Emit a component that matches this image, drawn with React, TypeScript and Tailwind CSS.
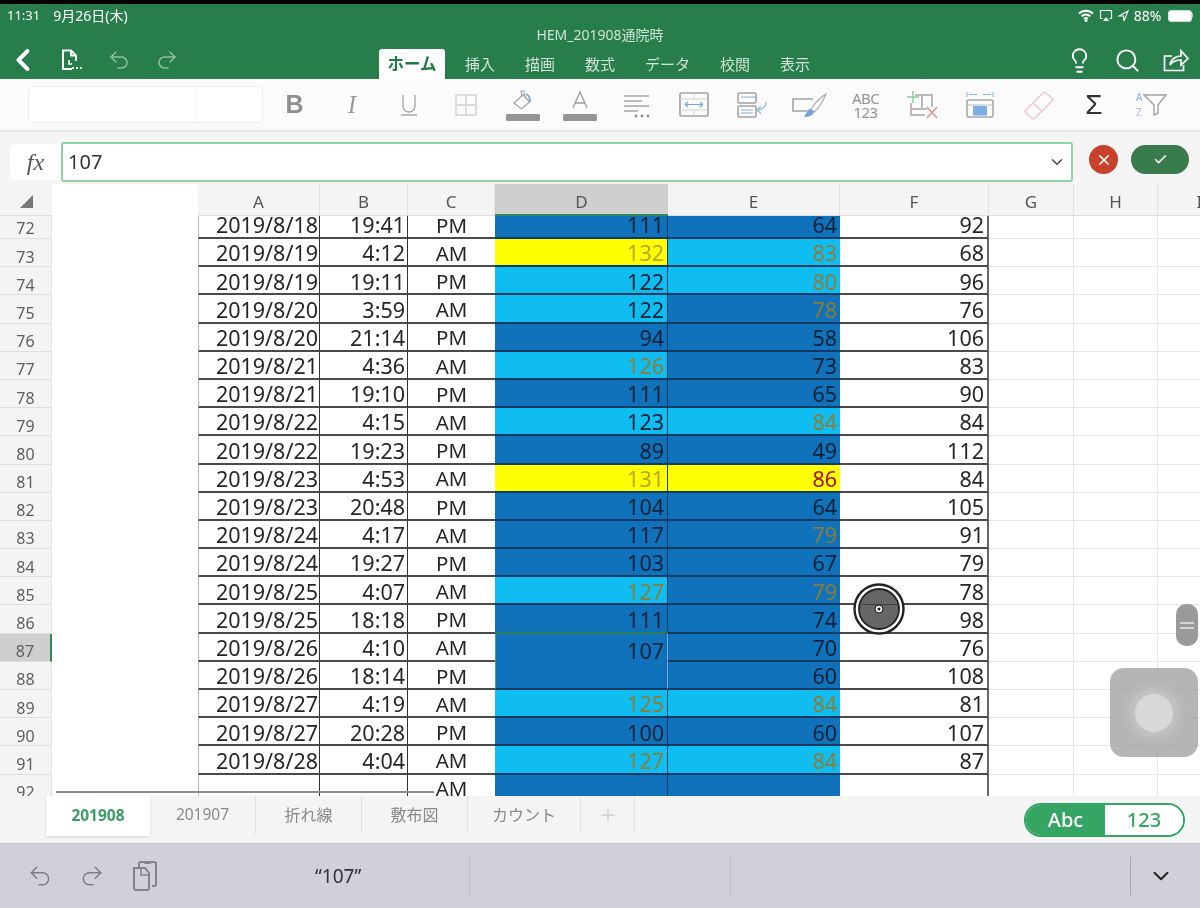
import React from "react";
import { ChevronLeft, Undo2, Redo2, Search, Lightbulb, ChevronDown, Check, X, Plus } from "lucide-react";

const JP = "font-['Noto_Sans','Noto_Sans_CJK_JP',sans-serif]";

type Tone = "dark" | "light" | "yellow";
type Ink = "k" | "o" | "y" | "r";
type Row = [number, string, string, string, string, Tone, Ink, string, Tone, Ink, string];

const rows: Row[] = [
  [72, "2019/8/18", "19:41", "PM", "111", "dark", "k", "64", "dark", "k", "92"],
  [73, "2019/8/19", "4:12", "AM", "132", "yellow", "y", "83", "light", "o", "68"],
  [74, "2019/8/19", "19:11", "PM", "122", "light", "k", "80", "light", "o", "96"],
  [75, "2019/8/20", "3:59", "AM", "122", "light", "k", "78", "dark", "o", "76"],
  [76, "2019/8/20", "21:14", "PM", "94", "dark", "k", "58", "dark", "k", "106"],
  [77, "2019/8/21", "4:36", "AM", "126", "light", "o", "73", "dark", "k", "83"],
  [78, "2019/8/21", "19:10", "PM", "111", "dark", "k", "65", "dark", "k", "90"],
  [79, "2019/8/22", "4:15", "AM", "123", "light", "k", "84", "light", "o", "84"],
  [80, "2019/8/22", "19:23", "PM", "89", "dark", "k", "49", "dark", "k", "112"],
  [81, "2019/8/23", "4:53", "AM", "131", "yellow", "y", "86", "yellow", "r", "84"],
  [82, "2019/8/23", "20:48", "PM", "104", "dark", "k", "64", "dark", "k", "105"],
  [83, "2019/8/24", "4:17", "AM", "117", "dark", "k", "79", "dark", "o", "91"],
  [84, "2019/8/24", "19:27", "PM", "103", "dark", "k", "67", "dark", "k", "79"],
  [85, "2019/8/25", "4:07", "AM", "127", "light", "o", "79", "dark", "o", "78"],
  [86, "2019/8/25", "18:18", "PM", "111", "dark", "k", "74", "dark", "k", "98"],
  [87, "2019/8/26", "4:10", "AM", "107", "dark", "k", "70", "dark", "k", "76"],
  [88, "2019/8/26", "18:14", "PM", "", "dark", "k", "60", "dark", "k", "108"],
  [89, "2019/8/27", "4:19", "AM", "125", "light", "o", "84", "light", "o", "81"],
  [90, "2019/8/27", "20:28", "PM", "100", "dark", "k", "60", "dark", "k", "107"],
  [91, "2019/8/28", "4:04", "AM", "127", "light", "o", "84", "light", "o", "87"],
  [92, "", "", "AM", "", "dark", "k", "", "dark", "k", ""],
];

const toneClass: Record<Tone, string> = {
  dark: "bg-[#0f72bb]",
  light: "bg-[#10bdf0]",
  yellow: "bg-[#ffff00]",
};
const inkClass: Record<Ink, string> = {
  k: "text-[#0b2138]",
  o: "text-[#8a7d38]",
  y: "text-[#b8a52a]",
  r: "text-[#a8101f]",
};

const GRID = "grid grid-cols-[52px_146px_122px_88px_87px_173px_172px_149px_85px_84px_84px]";
const blackLine = "border-b-2 border-[#4a4a4a] pt-[2px]";
const navyLine = "border-b-2 border-[#0e3a63] pt-[2px]";

function colorCell(v: string, tone: Tone, ink: Ink, extra: string) {
  return (
    <div className={`${toneClass[tone]} ${inkClass[ink]} ${navyLine} ${extra} flex items-center justify-end pr-[3px]`}>
      {v}
    </div>
  );
}

function Sheet() {
  return (
    <div className="h-[580px] shrink-0 overflow-hidden bg-white">
      <div className={`${GRID} auto-rows-[28.2px] -mt-[5.2px] text-[21.5px] leading-none text-[#262626] font-['Noto_Sans',sans-serif]`}>
        {rows.map((r) => {
          const [n, date, time, ap, d, dt, di, e, et, ei, f] = r;
          const sel = n === 87;
          return (
            <React.Fragment key={n}>
              <div className={`${sel ? "bg-[#cfcfcf] border-r-2 border-r-[#2f8a55]" : "bg-[#f4f4f5] border-r border-r-[#e4e4e6]"} border-b border-b-[#dedee0] flex items-center justify-center pt-[8px] text-[16px] text-[#5e5e5e]`}>
                {n}
              </div>
              <div className="bg-white" />
              <div className={`${blackLine} border-l border-l-[#b5b5b5] border-r-[1.5px] border-r-[#333] flex items-center justify-end pr-[1px]`}>{date}</div>
              <div className={`${blackLine} border-r-[1.5px] border-r-[#333] flex items-center justify-end pr-[2px]`}>{time}</div>
              <div className={`${blackLine} flex items-center justify-center text-[20.5px]`}>{ap}</div>
              {n === 87 ? (
                <div className="row-span-2 bg-[#0f72bb] text-[#0b2138] border-l border-l-[#4fa06a] border-r border-r-[#6aa6d6] border-b-2 border-b-[#0e3a63] flex items-start justify-end pr-[3px] pt-[6px]">
                  {d}
                </div>
              ) : n === 88 ? null : n === 86 ? (
                colorCell(d, dt, di, "border-b-[#2c7d5a] border-r border-r-[#0e3a63]")
              ) : (
                colorCell(d, dt, di, "border-r border-r-[#0e3a63]")
              )}
              {colorCell(e, et, ei, "")}
              <div className={`${blackLine} border-r-2 border-r-[#666] flex items-center justify-end pr-[3px]`}>{f}</div>
              <div className="border-b border-r border-[#e6e6ea]" />
              <div className="border-b border-r border-[#e6e6ea]" />
              <div className="border-b border-[#e6e6ea]" />
            </React.Fragment>
          );
        })}
      </div>
    </div>
  );
}

const Wifi = () => (
  <svg width="16" height="13" viewBox="0 0 16 13" fill="none" stroke="white" strokeWidth="1.9">
    <path d="M1 4.6a10 10 0 0 1 14 0" />
    <path d="M3.6 7.3a6.2 6.2 0 0 1 8.8 0" />
    <path d="M6.2 9.9a2.6 2.6 0 0 1 3.6 0" />
    <circle cx="8" cy="11.4" r="0.6" fill="white" />
  </svg>
);
const Airplay = () => (
  <svg width="14" height="13" viewBox="0 0 14 13" fill="none" stroke="white" strokeWidth="1.2">
    <path d="M3.5 9.5H1.5V1.5h11v8h-2" />
    <path d="M7 8l3 4H4z" fill="white" stroke="none" />
  </svg>
);
const Loc = () => (
  <svg width="11" height="12" viewBox="0 0 11 12" fill="none" stroke="white" strokeWidth="1.1">
    <path d="M10 1L1 6h4.4L6 11z" />
  </svg>
);
const Battery = () => (
  <div className="flex items-center ml-[1px]">
    <div className="w-[24px] h-[12px] rounded-[3px] bg-white border border-[#cfe3d6]" />
    <div className="w-[1.5px] h-[5px] bg-[#b5d1bf] rounded-r" />
  </div>
);

const DocIcon = () => (
  <svg width="24" height="24" viewBox="0 0 24 24" fill="none" stroke="white" strokeWidth="1.9">
    <path d="M13 21H4V2.5h8l5 5V13" />
    <path d="M12 2.5v5h5" />
    <path d="M10 12v4h3" strokeWidth="1.6" />
    <circle cx="14" cy="20" r="1.1" fill="white" stroke="none" />
    <circle cx="18" cy="20" r="1.1" fill="white" stroke="none" />
    <circle cx="22" cy="20" r="1.1" fill="white" stroke="none" />
  </svg>
);
const ShareIcon = () => (
  <svg width="28" height="26" viewBox="0 0 28 26" fill="none" stroke="white" strokeWidth="1.7">
    <path d="M10 9H2.5v14.5h19V18" />
    <path d="M8 18c1-6 6-9 11-9V4l7 7.5-7 6.5v-5c-4 0-8 1-11 5z" />
  </svg>
);

const I = ({ children }: { children: React.ReactNode }) => (
  <svg width="36" height="34" viewBox="0 0 36 34" fill="none">
    {children}
  </svg>
);

const toolbarIcons: React.ReactNode[] = [
  <span className="font-['Liberation_Sans',sans-serif] font-bold text-[25px] leading-none text-[#8f8f8f]">B</span>,
  <span className="font-['Liberation_Serif',serif] italic text-[25px] leading-none text-[#9a9a9a]">I</span>,
  <I>
    <path d="M12 7v11a6 6 0 0 0 12 0V7" stroke="#a5a5a5" strokeWidth="1.3" />
    <path d="M10 27h16" stroke="#b0b0b0" strokeWidth="1.6" />
  </I>,
  <I>
    <rect x="8" y="7" width="20" height="20" stroke="#dadada" strokeWidth="1.8" />
    <path d="M18 7v20M8 17h20" stroke="#dadada" strokeWidth="1.8" />
  </I>,
  <I>
    <path d="M9 15l9-8 6.5 7-8 7z" stroke="#a5a5a5" strokeWidth="1.3" fill="white" />
    <path d="M17 8l-1-5 3 0 1 6" stroke="#a5a5a5" strokeWidth="1.2" />
    <path d="M21 6c3 1 4 4 4 8" stroke="#6da4d9" strokeWidth="1.8" />
    <rect x="1" y="26" width="34" height="7" rx="1.5" fill="#959595" />
  </I>,
  <I>
    <path d="M11 20l7-16 7 16M13.5 15h9" stroke="#a0a0a0" strokeWidth="1.4" />
    <rect x="1" y="26" width="34" height="7" rx="1.5" fill="#959595" />
  </I>,
  <I>
    <path d="M5 8h25M5 13h18M5 18h25M5 23h14" stroke="#a5a5a5" strokeWidth="1.3" />
    <circle cx="17" cy="28" r="1.4" fill="#8a8a8a" />
    <circle cx="23" cy="28" r="1.4" fill="#8a8a8a" />
    <circle cx="29" cy="28" r="1.4" fill="#8a8a8a" />
  </I>,
  <I>
    <rect x="4" y="5" width="28" height="23" rx="1.5" stroke="#a3a3a3" strokeWidth="1.7" />
    <path d="M4 11h28M4 22h28M18 5v6M18 22v6" stroke="#d2d2d2" strokeWidth="1" />
    <path d="M9 16.5h18M9 16.5l3-2.5M9 16.5l3 2.5M27 16.5l-3-2.5M27 16.5l-3 2.5" stroke="#74a7db" strokeWidth="1.2" />
  </I>,
  <I>
    <rect x="5" y="5" width="18" height="10" rx="1.5" stroke="#a3a3a3" strokeWidth="1.6" />
    <rect x="5" y="18" width="18" height="11" rx="1.5" stroke="#a3a3a3" strokeWidth="1.6" />
    <path d="M8 9h16M8 22h12M8 25h12" stroke="#7fb0de" strokeWidth="1" />
    <path d="M33 14c0 5-4 8-9 8M24 22l4-3.5M24 22l4 3.5" stroke="#8ab5df" strokeWidth="1.2" />
  </I>,
  <I>
    <path d="M22 11H2v12h15" stroke="#a3a3a3" strokeWidth="1.6" />
    <path d="M35 6C30 9 24 15 20 21l3 3c5-4 9-11 12-18z" stroke="#a5a5a5" strokeWidth="1.1" fill="#fff" />
    <path d="M19 21c-3 1-3 4-6 8 4 0 9-1 10-5z" fill="#6ea3d8" />
  </I>,
  <div className="flex flex-col items-center text-[#929292] text-[15px] leading-[14px] font-['Noto_Sans',sans-serif] mt-[1px] tracking-[-0.5px]">
    <span>ABC</span>
    <span>123</span>
  </div>,
  <I>
    <path d="M8 3v12M2 9h12" stroke="#86cf9a" strokeWidth="1.4" />
    <path d="M10 7h17v12M6 15v12h14M6 21h16M17 7v14" stroke="#a7a7a7" strokeWidth="1.5" />
    <path d="M22 19l10 11M32 19L22 30" stroke="#e08f8f" strokeWidth="1.4" />
  </I>,
  <I>
    <rect x="5" y="12" width="26" height="17" rx="1.5" stroke="#a8a8a8" strokeWidth="1.6" />
    <path d="M5 17h26" stroke="#bdbdbd" strokeWidth="1" />
    <rect x="11" y="18" width="14" height="9.5" fill="#7caee3" />
    <path d="M5 4v5M31 4v5M7 6.5h8M21 6.5h8" stroke="#8ab5df" strokeWidth="1.1" />
  </I>,
  <I>
    <path d="M7 22L24 5c1-1 2-1 3 0l6 5c1 1 1 2 0 3L16 30c-1 1-2 1-3 0l-6-5c-1-1-1-2 0-3z" stroke="#eec6cf" strokeWidth="1.5" />
    <path d="M14 15l10 9" stroke="#eec6cf" strokeWidth="1.3" />
  </I>,
  <span className="font-['Liberation_Sans',sans-serif] text-[28px] leading-none text-[#333]">Σ</span>,
  <I>
    <path d="M12 12h22L26 22v8l-4 2V22z" stroke="#a5a5a5" strokeWidth="1.5" transform="translate(-1 -5)" />
    <text x="3" y="13" fontSize="10" fill="#8ab5e3" fontFamily="Noto Sans">A</text>
    <text x="3" y="28" fontSize="10" fill="#b9b4e8" fontFamily="Noto Sans">Z</text>
  </I>,
];

function Toolbar() {
  return (
    <div className="h-[53px] shrink-0 bg-[#fbfbfb] border-b-2 border-[#e6e6e6] flex items-center pl-[28px]">
      <div className="w-[235px] h-[37px] bg-white border border-[#ececec] rounded-[5px] flex shrink-0">
        <div className="w-[168px] border-r border-[#f2f2f2]" />
      </div>
      <div className="flex items-center ml-[2.5px]">
        {toolbarIcons.map((ic, i) => (
          <div key={i} className={`${i === 0 ? "w-[58px]" : "w-[57.07px]"} h-[40px] flex items-center justify-center`}>
            {ic}
          </div>
        ))}
      </div>
    </div>
  );
}

const tabs = ["挿入", "描画", "数式", "データ", "校閲", "表示"];

function Ribbon() {
  return (
    <div className="h-[75px] shrink-0 bg-[#287e4b] text-white flex flex-col">
      <div className="h-[23px] flex items-center justify-between pl-[7px] pr-[7px] text-[13px]">
        <div className={`flex items-center gap-[13px] ${JP}`}>
          <span>11:31</span>
          <span className="text-[14px]">9月26日(木)</span>
        </div>
        <div className="flex items-center gap-[5px]">
          <Wifi />
          <Airplay />
          <Loc />
          <span className="font-['Noto_Sans',sans-serif] text-[14px]">88%</span>
          <Battery />
        </div>
      </div>
      <div className={`h-[15px] flex items-center justify-center text-[14px] leading-none text-[#cfe3d6] ${JP}`}>HEM_201908通院時</div>
      <div className="flex-1 flex items-end">
        <div className="w-[379px] flex items-center h-full pb-[1px]">
          <ChevronLeft className="w-[36px] h-[36px] ml-[5px]" strokeWidth={2.6} />
          <div className="ml-[18px]"><DocIcon /></div>
          <Undo2 className="w-[24px] h-[24px] ml-[24px] text-[#8fbfa2]" strokeWidth={1.5} />
          <Redo2 className="w-[24px] h-[24px] ml-[24px] text-[#8fbfa2]" strokeWidth={1.5} />
        </div>
        <div className={`w-[66px] h-[30px] bg-white rounded-t-[3px] text-[#1f7a48] font-bold text-[16.5px] flex items-center justify-center ${JP}`}>ホーム</div>
        <div className={`flex gap-[30px] ml-[20px] h-[30px] items-center text-[15px] text-[#cfe3d6] ${JP}`}>
          {tabs.map((t) => (
            <span key={t}>{t}</span>
          ))}
        </div>
        <div className="ml-auto flex items-center h-full pb-[1px] pr-[10px] gap-[21px]">
          <Lightbulb className="w-[27px] h-[27px]" strokeWidth={1.6} />
          <Search className="w-[27px] h-[27px]" strokeWidth={1.7} />
          <ShareIcon />
        </div>
      </div>
    </div>
  );
}

function FormulaBar() {
  return (
    <div className="h-[52px] shrink-0 bg-[#f5f5f5] flex items-center pl-[10px] pt-[8px]">
      <div className="w-[51px] h-[36px] bg-white rounded-l-[5px] flex items-center justify-center font-['Liberation_Serif',serif] italic text-[24px] text-[#555]">fx</div>
      <div className="w-[1012px] h-[40px] bg-white border-2 border-[#8fd3a9] rounded-[3px] flex items-center justify-between pl-[5px] pr-[5px] text-[20px] text-[#333] font-['Noto_Sans',sans-serif]">
        <span>107</span>
        <ChevronDown className="w-[18px] h-[18px] text-[#444]" strokeWidth={2} />
      </div>
      <div className="ml-[16px] -mt-[5px] w-[29px] h-[29px] rounded-full bg-[#c8412a] flex items-center justify-center">
        <X className="w-[16px] h-[16px] text-white" strokeWidth={2.6} />
      </div>
      <div className="ml-[13px] -mt-[6px] w-[58px] h-[29px] rounded-full bg-[#3a7b4e] flex items-center justify-center">
        <Check className="w-[15px] h-[15px] text-white" strokeWidth={2.4} />
      </div>
    </div>
  );
}

function ColumnHeader() {
  const cols = ["A", "B", "C", "D", "E", "F", "G", "H", "I"];
  return (
    <div className={`${GRID} h-[32px] shrink-0 text-[17px] leading-none text-[#555] font-['Noto_Sans',sans-serif]`}>
      <div className="bg-[#f4f4f5] border-b border-[#dedee0] flex items-center justify-center pt-[3px]">
        <div className="w-0 h-0 border-l-[13px] border-l-transparent border-b-[13px] border-b-[#777]" />
      </div>
      <div className="bg-white" />
      {cols.map((c) => (
        <div
          key={c}
          className={`${c === "D" ? "bg-[#cfcfcf] border-b-2 border-b-[#2f8a55]" : "bg-[#f4f4f5] border-b border-b-[#dedee0] border-r border-r-[#e2e2e4]"} flex items-center justify-center pt-[4px]`}
        >
          {c}
        </div>
      ))}
    </div>
  );
}

function SheetTabs() {
  const t: [string, string, string][] = [
    ["201907", "w-[106px]", "text-[15.5px]"],
    ["折れ線", "w-[106px]", "text-[16px]"],
    ["敷布図", "w-[106px]", "text-[16px]"],
    ["カウント", "w-[113px]", "text-[16px]"],
  ];
  return (
    <div className="h-[47px] shrink-0 bg-[#f4f4f5] flex items-start pl-[46px] pr-[15px] relative">
      <div className={`w-[104px] h-[40px] bg-white shadow-[0_1px_2px_rgba(0,0,0,0.12)] flex items-center justify-center text-[15.5px] font-bold text-[#3a9d61] ${JP}`}>201908</div>
      {t.map(([s, w, z]) => (
        <div key={s} className={`${w} ${z} h-[38px] border-r border-[#e2e2e4] flex items-center justify-center text-[#8a8a8a] ${JP}`}>
          {s}
        </div>
      ))}
      <div className="w-[54px] h-[38px] border-r border-[#e2e2e4] flex items-center justify-center text-[#c8c8c8]">
        <Plus className="w-[20px] h-[20px]" strokeWidth={1.5} />
      </div>
      <div className="ml-auto mt-[7px] w-[161px] h-[34px] rounded-full border-2 border-[#35a563] overflow-hidden flex text-[20px] font-medium font-['Noto_Sans',sans-serif]">
        <div className="w-[79px] bg-[#35a563] text-white flex items-center justify-center">Abc</div>
        <div className="flex-1 bg-white text-[#35a563] flex items-center justify-center">123</div>
      </div>
    </div>
  );
}

function KeyBar() {
  return (
    <div className="h-[65px] shrink-0 bg-[#d0d1d8] border-t border-[#c4c5cc] flex items-center">
      <div className="w-[470px] h-[42px] border-r border-[#bdbec6] flex items-center">
        <Undo2 className="w-[26px] h-[26px] ml-[27px] text-[#7d7e85]" strokeWidth={1.4} />
        <Redo2 className="w-[26px] h-[26px] ml-[26px] text-[#7d7e85]" strokeWidth={1.4} />
        <svg className="ml-[26px]" width="28" height="32" viewBox="0 0 28 32" fill="none">
          <path d="M8 7V4c0-1 1-2 2-2h13c1 0 2 1 2 2v20c0 1-1 2-2 2h-2" stroke="#83848b" strokeWidth="2" />
          <rect x="13" y="1" width="7" height="3" rx="1" fill="#83848b" />
          <path d="M3 8h11l4 5v15c0 1-1 2-2 2H5c-1 0-2-1-2-2z" stroke="#83848b" strokeWidth="2" fill="#d0d1d8" />
          <path d="M10 8v7h7" stroke="#83848b" strokeWidth="1.6" />
        </svg>
        <span className="ml-[156px] text-[19px] text-[#333] font-['Noto_Sans',sans-serif]">“107”</span>
      </div>
      <div className="w-[261px] h-[42px] border-r border-[#bdbec6]" />
      <div className="w-[400px] h-[38px] border-r border-[#a9aab2]" />
      <ChevronDown className="w-[26px] h-[26px] ml-[17px] text-[#222]" strokeWidth={1.8} />
    </div>
  );
}

export default function App() {
  return (
    <div className="relative w-[1200px] h-[908px] overflow-hidden bg-white flex flex-col blur-[0.5px]">
      <div className="h-[4px] shrink-0 bg-black" />
      <Ribbon />
      <Toolbar />
      <FormulaBar />
      <ColumnHeader />
      <Sheet />
      <SheetTabs />
      <KeyBar />

      <div className="absolute left-[56px] top-[791px] w-[378px] h-[2px] bg-[#8a8a8a]" />
      <svg className="absolute left-[853px] top-[583px]" width="52" height="52" viewBox="0 0 52 52">
        <circle cx="26" cy="26" r="24.5" fill="white" stroke="#222" strokeWidth="2.4" />
        <circle cx="26" cy="26" r="20" fill="#666" stroke="#222" strokeWidth="1.8" />
        <path d="M7 21.5h38" stroke="#444" strokeWidth="1" />
        <circle cx="26" cy="26" r="4" fill="white" stroke="#111" strokeWidth="1" />
        <circle cx="26" cy="26" r="1.5" fill="#111" />
      </svg>
      <div className="absolute left-[1176px] top-[604px] w-[22px] h-[42px] rounded-[10px] bg-[#9a9a9a] flex flex-col items-center justify-center gap-[3px]">
        <div className="w-[14px] h-[2px] bg-[#d4d4d4]" />
        <div className="w-[14px] h-[2px] bg-[#d4d4d4]" />
      </div>
      <div className="absolute left-[1110px] top-[668px] w-[88px] h-[89px] rounded-[14px] bg-[#9c9c9c]/75 flex items-center justify-center">
        <div className="w-[38px] h-[38px] rounded-full bg-[#d8d8d8] shadow-[0_0_10px_7px_rgba(205,205,205,0.6)]" />
      </div>
    </div>
  );
}
